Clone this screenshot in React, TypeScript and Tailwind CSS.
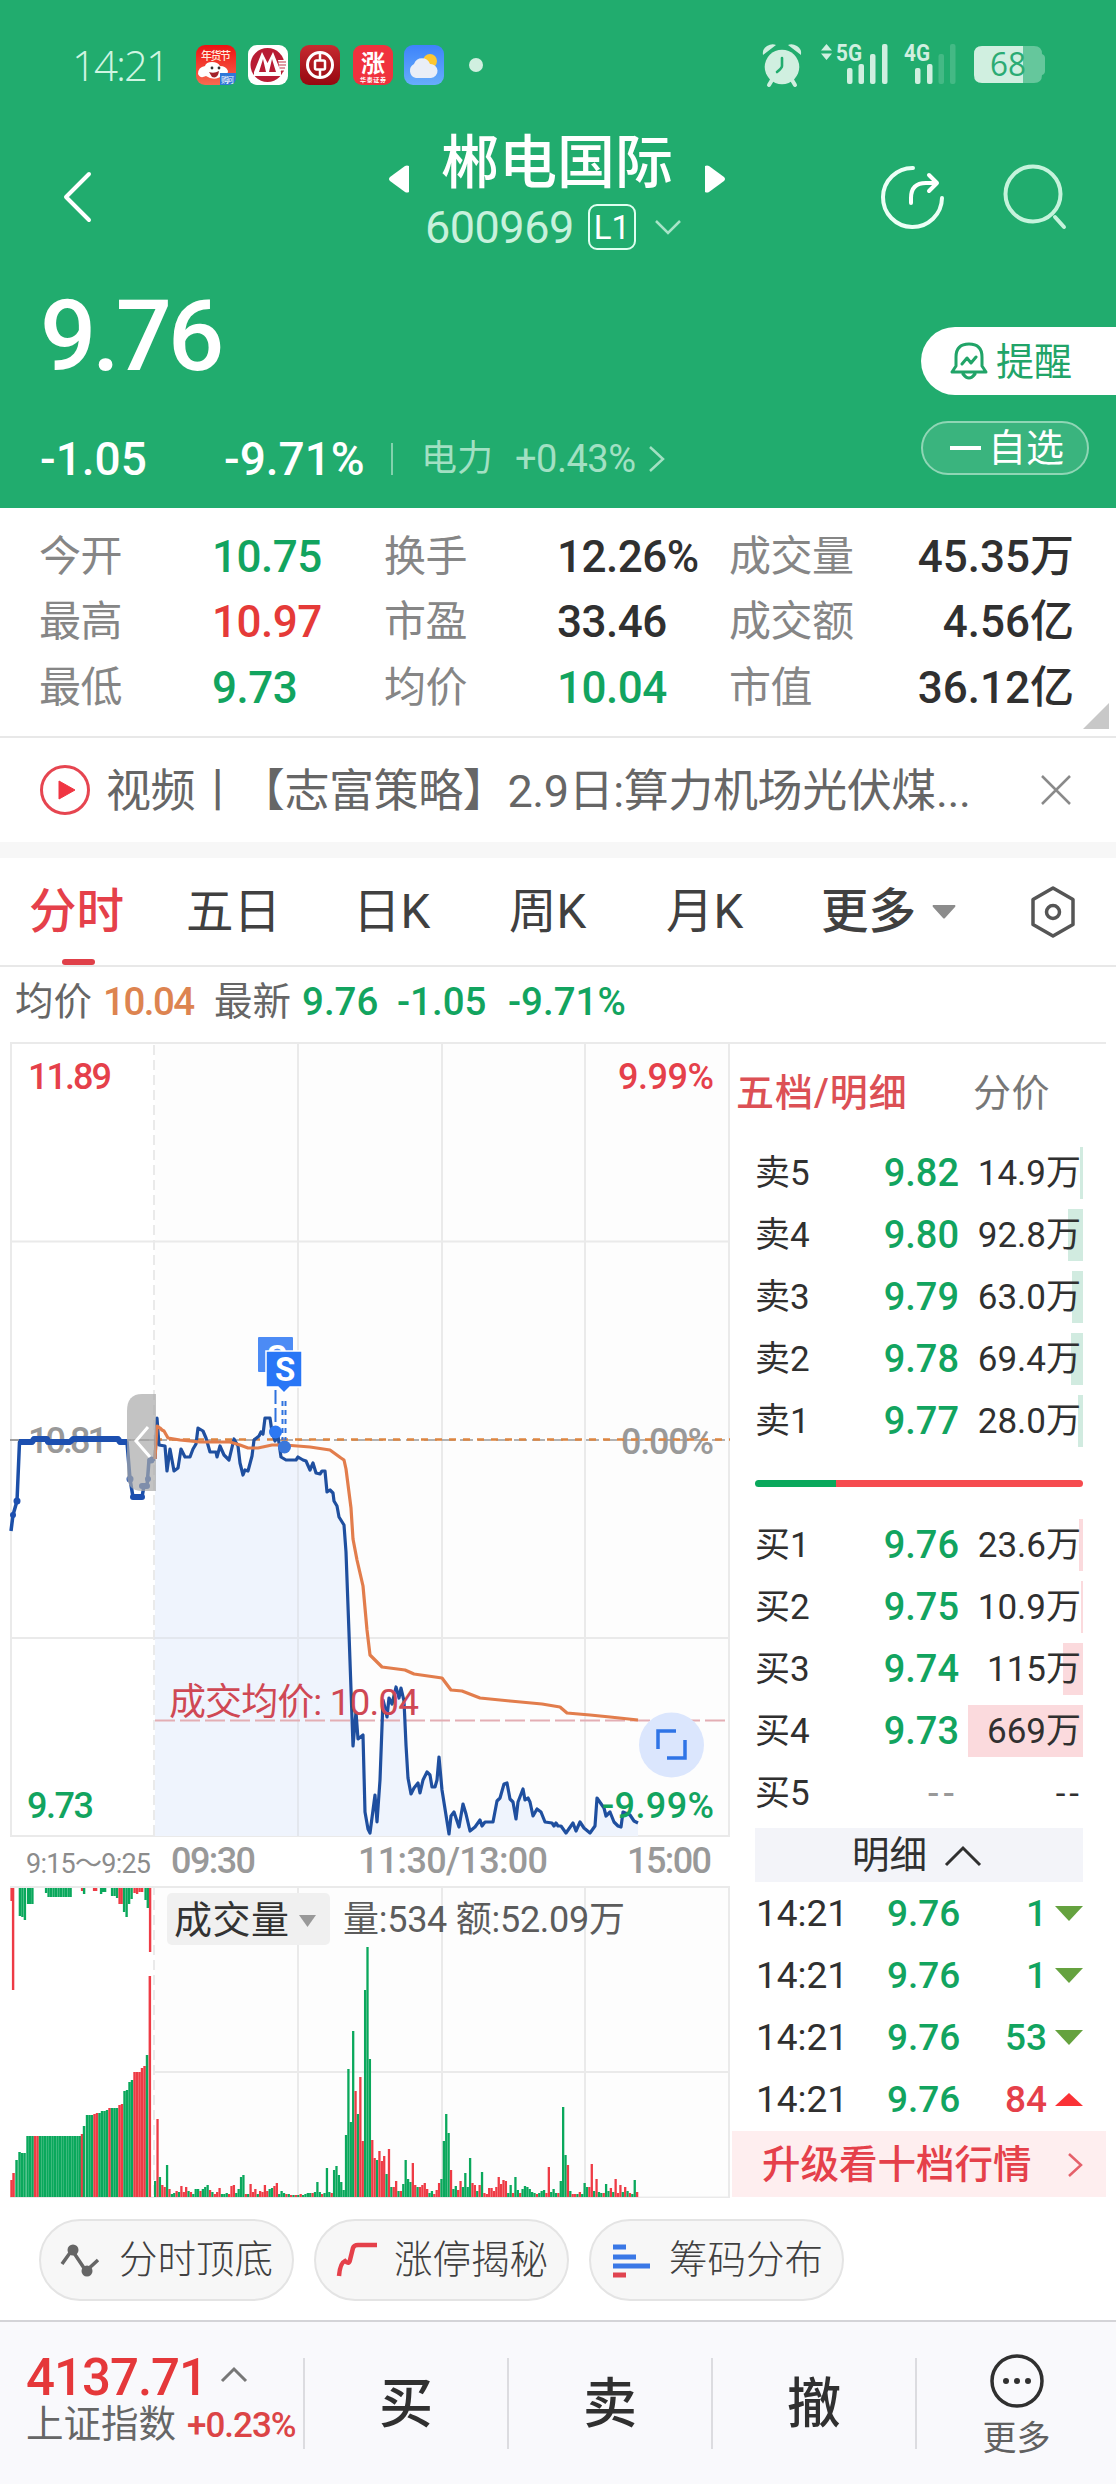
import React from 'react';

const GREEN = '#12a45f';
const RED = '#e5404a';
const BAR_GREEN = '#0aa85c';
const BAR_RED = '#ee3b45';

const stats = [
    ['今开', '10.75', 'text-[#12a45f]', '换手', '12.26%', 'text-[#303030]', '成交量', '45.35万'],
    ['最高', '10.97', 'text-[#e53a38]', '市盈', '33.46', 'text-[#303030]', '成交额', '4.56亿'],
    ['最低', '9.73', 'text-[#12a45f]', '均价', '10.04', 'text-[#12a45f]', '市值', '36.12亿'],
];

const sells = [
    { label: '卖5', price: '9.82', qty: '14.9万', bar: 3 },
    { label: '卖4', price: '9.80', qty: '92.8万', bar: 15 },
    { label: '卖3', price: '9.79', qty: '63.0万', bar: 11 },
    { label: '卖2', price: '9.78', qty: '69.4万', bar: 12 },
    { label: '卖1', price: '9.77', qty: '28.0万', bar: 5 },
];

const buys = [
    { label: '买1', price: '9.76', qty: '23.6万', bar: 4 },
    { label: '买2', price: '9.75', qty: '10.9万', bar: 2 },
    { label: '买3', price: '9.74', qty: '115万', bar: 20 },
    { label: '买4', price: '9.73', qty: '669万', bar: 115 },
    { label: '买5', price: '--', qty: '--', bar: 0 },
];

const ticks = [
    { qty: '1', up: false },
    { qty: '1', up: false },
    { qty: '53', up: false },
    { qty: '84', up: true },
];

const preLine = '11,1531 13,1515 17,1501 19.5,1442 32,1442 34,1439 47,1439 48,1442 70,1442 73,1439 118,1439 120,1442 127,1442 130,1479 133,1497 142,1497 144,1486 147,1486 149,1460 155,1459';

const priceLine = '155,1459 157,1418 159,1445 165,1446 167,1471 170,1449 174,1471 178,1468 181,1449 185,1457 190,1457 193,1449 196,1444 198,1428 203,1431 206,1438 210,1452 216,1452 217,1457 220,1446 224,1455 229,1460 234,1439 238,1446 240,1463 243,1475 245,1470 248,1471 252,1456 254,1440 259,1436 261,1432 263,1434 265,1418 270,1418 272,1432 275,1441 278,1436 281,1457 286,1460 296,1460 298,1457 303,1460 306,1461 310,1470 313,1463 316,1473 320,1474 322,1471 325,1471 327,1492 330,1490 333,1493 334,1501 337,1506 339,1517 344,1525 346,1552 349,1633 353,1746 356,1712 358,1739 363,1735 365,1812 368,1829 370,1833 375,1795 377,1822 380,1780 383,1700 385,1708 387,1717 389,1698 392,1704 396,1687 399,1698 401,1688 404,1701 406,1745 408,1778 411,1794 414,1788 418,1783 420,1793 423,1780 427,1772 430,1775 432,1787 435,1787 437,1780 439,1757 442,1790 449,1834 451,1816 454,1812 459,1827 463,1804 466,1814 470,1831 475,1827 480,1820 482,1826 485,1822 493,1822 497,1801 500,1798 504,1784 507,1783 510,1799 513,1802 516,1819 518,1802 523,1789 525,1800 528,1798 530,1802 533,1816 537,1809 541,1812 545,1822 552,1823 554,1826 556,1823 558,1826 561,1826 566,1833 573,1823 576,1831 580,1822 584,1828 590,1833 595,1826 597,1798 604,1808 606,1816 610,1812 614,1822 618,1826 621,1827 623,1812 630,1815 634,1821 638,1823';

const avgLine = '155,1459 157,1426 160,1428 162,1430 164,1431 168,1438 180,1440 200,1442 230,1442 240,1445 248,1448 258,1448 272,1445 285,1445 310,1447 330,1450 341,1458 344,1460 346,1469 351,1508 353,1539 357,1560 363,1586 367,1630 370,1655 375,1660 382,1667 405,1670 414,1674 442,1678 451,1690 462,1691 480,1698 510,1701 542,1704 560,1707 567,1713 590,1715 610,1717 638,1720';

// positive = red, negative = green, one value per minute
const volumes = [
    -16, 78, -20, 12, 10, -32, 8, -3, -4, 6, -5, 11, 5, 10, -6, 5, -3, -8, -8, 6, -8, -10, -12, 7, -5, 3, 5, 9, -3, -3, -4, 3, 11, 12, -4,
    -8, -20, -22, 3, -3, 13, 5, 8, -3, 6, 5, 12, 6, -8, -9, 11, 14, -3, -6, -4, 3, -3, 2, -2, 2, -2, 3, -2, -3, -4, -4, 4, -5, -15, -5, 3,
    -4, -29, -5, 4, -27, -31, -22, -15, -7, -62, -128, -75, -166, 106, -83, 120, 56, -207, -250, -138, 57, 39, -37, 46, 36, 41, -23, 48,
    -10, 10, 16, -6, 6, -13, -37, -18, -15, 34, 12, -10, 10, 12, 14, 8, -4, -6, 3, 7, 14, -18, -56, -83, -64, 27, -8, -11, 7, 16, -10, -24,
    -10, -39, 14, 12, -6, 12, -25, 4, 3, 9, 9, 6, 10, 20, 13, 17, 16, -4, -12, 4, -20, -7, 4, -8, -11, -10, -8, -5, -4, 3, -4, -6, -7, 4, 30,
    -5, -8, -4, 4, -16, -90, -42, 32, -6, 3, 3, -3, 5, -3, -14, -10, 10, 33, -6, 18, -5, -4, 4, -13, -6, 9, -5, 18, 4, 12, -5, 10, -6, 4, -3, -17, 5,
];

// call auction section: [x, height]
const preVolumes: number[][] = [
    [11.5, 17], [13.5, 24], [16.5, -37], [19.5, -45], [22, -44], [24.5, -44], [27.5, -61], [30, -61], [32.5, -61], [35, 61], [37.5, 61],
    [40, -61], [42.5, -61], [45, -61], [47.5, -61], [50, -61], [52.5, -61], [55, -61], [57.5, -61], [60, -61], [62.5, -61], [65, -61],
    [67.5, -61], [70, -61], [72.5, -61], [75, -61], [77.5, -61], [80, -61], [82, 63], [84, -71], [87, -82], [89.5, -82], [92, -82],
    [94.5, 83], [97, 84], [99.5, -84], [102, -86], [104.5, -86], [107, -87], [109.5, 89], [112, -89], [114.5, -89], [117, -89],
    [119.5, 92], [122, 93], [124.5, -106], [127, -107], [129.5, -115], [132, -117], [134.5, 125], [137, 125], [139.5, 125],
    [142, 129], [144.5, 131], [147, -142], [149.8, 221],
];

const preTop: number[][] = [
    [11.5, 13], [13, 102], [19.8, -28], [22.3, -29], [24.8, -32], [28, -16], [30, -16], [32.3, -16], [46, -5], [48.5, -9], [51, -9], [53.5, -9],
    [56, -9], [58.5, -9], [61, -9], [63.5, -9], [66, -9], [68.5, -9], [70.5, -9], [82, 3], [84, -6], [94, 3], [96, 3], [101, -6], [103, -4], [105, -4],
    [112, -8], [114.5, -8], [117, -10], [119.5, 16], [121.5, 16], [124, -24], [126.5, -29], [129, -16], [131.5, -11], [134.5, 5], [137, 6],
    [139.5, 4], [142, 4], [145.5, -12], [147.7, -20], [150, 64],
];

const AppIcons = () => (
    <svg className="ml-[30px]" width="250" height="40" viewBox="0 0 250 40">
        <defs>
            <linearGradient id="boc" x1="0" y1="0" x2="0" y2="1">
                <stop offset="0" stopColor="#c62a30" />
                <stop offset="1" stopColor="#960810" />
            </linearGradient>
            <linearGradient id="sky" x1="0" y1="0" x2="0" y2="1">
                <stop offset="0" stopColor="#3e83fb" />
                <stop offset="1" stopColor="#67adfb" />
            </linearGradient>
            <linearGradient id="fest" x1="0" y1="0" x2="0" y2="1">
                <stop offset="0" stopColor="#ee1112" />
                <stop offset="1" stopColor="#f76a50" />
            </linearGradient>
        </defs>
        <rect x="0" y="0" width="40" height="40" rx="9" fill="url(#fest)" />
        <text x="5" y="15" fontSize="11" fontWeight="500" fill="#ffe9dc" textLength="30">年货节</text>
        <path d="M2 29q0-7 7-8q1-4 7-4t8 4q6 0 8 5q0 4-5 4q-8 7-17 1q-6 3-8-2z" fill="#fff" />
        <circle cx="16" cy="23" r="1.4" fill="#333" />
        <circle cx="23" cy="23" r="1.4" fill="#333" />
        <path d="M13 27q5 2 10-1q-1 8-7 6z" fill="#a3222a" />
        <path d="M24 28h16v4q0 8-8 8h-8z" fill="#2f77d8" />
        <text x="25" y="37.500" fontSize="8" fill="#fff" textLength="13">购河</text>

        <rect x="52" y="0" width="40" height="40" rx="9" fill="#fff" />
        <circle cx="71.500" cy="20" r="17" fill="#b81c34" />
        <path d="M82 15h9v11h-7z" fill="#fff" />
        <path d="M82 17h8M83 20h7M84 23h5M85 26h3" stroke="#c23a4c" strokeWidth="1.200" />
        <path d="M58 27L66 7L71.500 18L77 7L85 27V31H58z" fill="#fff" />
        <path d="M63 27L67 14L70 27zM73 27L76 14L80 27z" fill="#b81c34" />

        <rect x="104" y="0" width="40" height="40" rx="9" fill="url(#boc)" />
        <circle cx="124" cy="20" r="12.500" fill="none" stroke="#fff" strokeWidth="3" />
        <rect x="119" y="15.500" width="10" height="9" rx="1.500" fill="none" stroke="#fff" strokeWidth="2.500" />
        <path d="M124 8v7M124 25v7" stroke="#fff" strokeWidth="2.500" />

        <rect x="157" y="0" width="40" height="40" rx="9" fill="#f0323e" />
        <text x="165" y="27" fontSize="24" fontWeight="700" fill="#fff">涨</text>
        <text x="164" y="37" fontSize="6" fontWeight="700" fill="#fff" textLength="26">华泰证券</text>

        <rect x="208" y="0" width="40" height="40" rx="9" fill="url(#sky)" />
        <circle cx="234" cy="16" r="7" fill="#fdc731" />
        <path d="M220 33a7.500 7.500 0 0 1-2-14a8.500 8.500 0 0 1 16 0a7 7 0 0 1 1 14z" fill="#e9eef7" />
    </svg>
);

const SystemIcons = () => (
    <svg className="absolute right-[70px] top-[40px]" width="286" height="50" viewBox="760 40 286 50" fill="#d0efe0">
        <circle cx="782" cy="67" r="17.300" />
        <path d="M763 55q-1-6 4-9q5-3 9-1zM801 55q1-6-4-9q-5-3-9-1z" />
        <path d="M772 80l-3 5M792 80l3 5" stroke="#d0efe0" strokeWidth="4" strokeLinecap="round" />
        <path d="M782 58v8q0 2-5 6" fill="none" stroke="#21ac6e" strokeWidth="2.600" strokeLinecap="round" />
        <path d="M821 50.500l5.500-6.500l5.500 6.500zM821 53.500l5.500 6.500l5.500-6.500z" />
        <text x="836" y="61" fontSize="24" fontWeight="700" textLength="26" lengthAdjust="spacingAndGlyphs">5G</text>
        <rect x="847" y="68" width="5.500" height="16" rx="2" />
        <rect x="858.500" y="64" width="5.500" height="20" rx="2" />
        <rect x="870" y="54" width="5.500" height="30" rx="2" />
        <rect x="882" y="44" width="5.500" height="40" rx="2" />
        <text x="904" y="61" fontSize="24" fontWeight="700" textLength="26" lengthAdjust="spacingAndGlyphs">4G</text>
        <rect x="915" y="68" width="5.500" height="16" rx="2" />
        <rect x="927" y="64" width="5.500" height="20" rx="2" />
        <rect x="938.500" y="54" width="5.500" height="30" rx="2" opacity=".2" />
        <rect x="950" y="44" width="5.500" height="40" rx="2" opacity=".2" />
        <path d="M982 46h41v37h-41q-8 0-8-8v-21q0-8 8-8z" />
        <path d="M1023 46h11q8 0 8 8q3 1 3 4v13q0 3-3 4q0 8-8 8h-11z" fill="#65c79c" />
        <text x="990" y="76" fontSize="32" fill="#2bab74" textLength="36" lengthAdjust="spacingAndGlyphs" className="[font-family:'Open_Sans',sans-serif]">68</text>
    </svg>
);

const Header = () => (
    <header className="h-[508px] bg-[#21ac6e] text-white">
        <div className="relative flex h-[130px] items-center pl-[72px]">
            <span className="w-[94px] text-[42px] leading-none tracking-[-2px] whitespace-nowrap font-light text-[#d0f5e2] [font-family:'Open_Sans',sans-serif]">14:21</span>
            <AppIcons />
            <span className="ml-[23px] size-[14px] rounded-full bg-[#d0efe0]" />
            <SystemIcons />
        </div>

        <div className="flex h-[134px] pl-[62px]">
            <svg className="mt-[40px]" width="32" height="54" viewBox="0 0 32 54" fill="none" stroke="#fff" strokeWidth="4" strokeLinecap="round" strokeLinejoin="round">
                <path d="M27 4L4 27L27 50" />
            </svg>
            <div className="ml-[295px] flex w-[336px] flex-col">
                <div className="flex h-[64px] items-center justify-between text-[58px] leading-none font-medium">
                    <svg className="mt-[34px]" width="20" height="28" viewBox="0 0 20 28" fill="#fff"><path d="M20 1v26q-2 1-4 0L1 16q-2-2 0-4L16 1q2-1 4 0z" /></svg>
                    <span className="mt-[2px]">郴电国际</span>
                    <svg className="mt-[34px]" width="20" height="28" viewBox="0 0 20 28" fill="#fff"><path d="M0 1v26q2 1 4 0L19 16q2-2 0-4L4 1q-2-1-4 0z" /></svg>
                </div>
                <div className="mt-[9px] ml-[36px] flex h-[48px] items-center">
                    <span className="w-[163px] text-[45px] leading-none tracking-[-0.500px] text-[#c8f1dc]">600969</span>
                    <span className="flex h-[46px] w-[48px] items-center justify-center rounded-[9px] border-[2.500px] border-[#e0fff0] text-[33px] leading-none">L1</span>
                    <svg className="ml-[18px]" width="28" height="17" viewBox="0 0 28 17" fill="none" stroke="#a8e4c8" strokeWidth="2.500"><path d="M2 2l12 12L26 2" /></svg>
                </div>
            </div>
            <svg className="mt-[33px] ml-[153px]" width="68" height="68" viewBox="0 0 68 68" fill="none" stroke="#fff" strokeWidth="4" strokeLinecap="round" strokeLinejoin="round">
                <path d="M35 5A29.500 29.500 0 1 0 64 35" stroke="#ecfff6" />
                <path d="M33 40v-5q0-15 15-15h11M51 12l8 8l-8 8" />
            </svg>
            <svg className="mt-[33px] ml-[55px]" width="68" height="68" viewBox="0 0 68 68" fill="none" stroke="#c5f3dc" strokeWidth="4" strokeLinecap="round">
                <circle cx="32" cy="31" r="27.500" />
                <path d="M54 54l9 10" />
            </svg>
        </div>

        <div className="flex justify-between">
            <div className="pl-[40px]">
                <div className="mt-[22px] text-[99px] leading-[100px] font-medium tracking-[-4px]">9.76</div>
                <div className="mt-[48px] flex h-[50px] items-center text-[46px] leading-none">
                    <span className="w-[184px] font-medium">-1.05</span>
                    <span className="w-[167px] font-medium">-9.71%</span>
                    <span className="h-[32px] w-[2px] bg-[#82d2ad]" />
                    <span className="ml-[28px] w-[94px] text-[36px] text-[#a2e0c3]">电力</span>
                    <span className="w-[133px] text-[38px] tracking-[-0.500px] text-[#a2e0c3]">+0.43%</span>
                    <svg width="18" height="28" viewBox="0 0 18 28" fill="none" stroke="#a2e0c3" strokeWidth="2.500"><path d="M2 2l13 12L2 26" /></svg>
                </div>
            </div>
            <div className="flex flex-col items-end pt-[63px]">
                <div className="flex h-[68px] w-[195px] items-center rounded-l-full bg-white pl-[29px] text-[#21a468]">
                    <svg width="38" height="40" viewBox="0 0 38 40" fill="none" stroke="currentColor" strokeWidth="3" strokeLinejoin="round" strokeLinecap="round">
                        <path d="M2 31h34l-4-6v-9q0-13-13-13T6 16v9zM13 33q6 8 12 0M12 23l5-6l4 5l5-6" />
                    </svg>
                    <span className="mt-[2px] ml-[8px] text-[38px] leading-none">提醒</span>
                </div>
                <div className="mt-[26px] mr-[27px] flex h-[54px] w-[168px] items-center rounded-full border-2 border-[#8fd6b5] bg-[#3ab47e] pl-[27px]">
                    <span className="h-[4px] w-[31px] bg-white" />
                    <span className="ml-[7px] text-[38px] leading-none">自选</span>
                </div>
            </div>
        </div>
    </header>
);

const StatsGrid = () => (
    <div className="relative h-[230px] border-b-2 border-[#e8e8e8] pt-[16px] pl-[39px] text-[44px] leading-none">
        {stats.map((r) => (
            <div key={r[0]} className="grid h-[65.500px] grid-cols-[173px_172px_173px_172px_345px] items-center tracking-[-0.500px] text-[#303030]">
                <span className="text-[42px] text-[#868686]">{r[0]}</span>
                <span className={`font-medium ${r[2]}`}>{r[1]}</span>
                <span className="text-[42px] text-[#868686]">{r[3]}</span>
                <span className={`font-medium whitespace-nowrap ${r[5]}`}>{r[4]}</span>
                <span className="flex items-center justify-between">
                    <span className="text-[42px] text-[#868686]">{r[6]}</span>
                    <span className="font-medium tracking-normal">{r[7]}</span>
                </span>
            </div>
        ))}
        <svg className="absolute right-[7px] bottom-[7px]" width="26" height="26" viewBox="0 0 26 26" fill="#c8c8c8"><path d="M26 0v26H0z" /></svg>
    </div>
);

const NewsBar = () => (
    <div className="flex h-[104px] items-center pl-[38px] text-[45px] leading-none text-[#666]">
        <svg width="54" height="54" viewBox="0 0 54 54">
            <circle cx="27" cy="27" r="23.500" fill="none" stroke="#e64550" strokeWidth="3" />
            <path d="M21 18l16 9l-16 9z" fill="#f03542" stroke="#f03542" strokeWidth="1" />
        </svg>
        <span className="mt-[2px] ml-[14px] w-[934px] tracking-[-0.400px] whitespace-nowrap">视频丨【志富策略】2.9日:算力机场光伏煤...</span>
        <svg width="32" height="32" viewBox="0 0 32 32" stroke="#8a8a8a" strokeWidth="2.500"><path d="M2 2l28 28M30 2L2 30" /></svg>
    </div>
);

const Tabs = () => (
    <div className="flex h-[109px] items-center border-b-2 border-[#e8e8e8] pl-[29px] text-[47.500px] leading-none text-[#404040]">
        <div className="relative w-[157px] pt-[2px] font-medium text-[#e5404a]">
            分时
            <span className="absolute -bottom-[29px] left-[33px] h-[6px] w-[33px] rounded-[3px] bg-[#e04049]" />
        </div>
        <span className="mt-[2px] w-[167px]">五日</span>
        <span className="mt-[2px] w-[156px]">日K</span>
        <span className="mt-[2px] w-[157px]">周K</span>
        <span className="mt-[2px] w-[155px]">月K</span>
        <span className="mt-[2px] w-[111px] font-medium">更多</span>
        <svg width="24" height="14" viewBox="0 0 24 14" fill="#8c8c8c"><path d="M1 0h22q1 1 0 2L13 13q-1 1-2 0L1 2q-1-1 0-2z" /></svg>
        <svg className="ml-[71px]" width="52" height="54" viewBox="0 0 52 54" fill="none" stroke="#555" strokeWidth="3.500" strokeLinejoin="round">
            <path d="M26 3L46 14.500V39.500L26 51L6 39.500V14.500z" />
            <circle cx="26" cy="27" r="6.500" />
        </svg>
    </div>
);

const InfoLine = () => (
    <div className="flex h-[75px] items-center pt-[4px] pl-[15px] pb-[8px] text-[38.500px] leading-none text-[#666]">
        <span className="w-[88px]">均价</span>
        <span className="w-[111px] font-medium tracking-[-1.500px] text-[#dd8450]">10.04</span>
        <span className="w-[88px]">最新</span>
        <span className="w-[95px] font-medium text-[#12a45f]">9.76</span>
        <span className="w-[111px] font-medium text-[#12a45f]">-1.05</span>
        <span className="font-medium text-[#12a45f]">-9.71%</span>
    </div>
);

interface LabelProps {
    x: number;
    y: number;
    w: number;
    size?: number;
    weight?: number;
    fill: string;
    children: string;
}

const Label = ({ x, y, w, size = 36, weight = 500, fill, children }: LabelProps) => (
    <text x={x} y={y} fontSize={size} fontWeight={weight} fill={fill} textLength={w}>{children}</text>
);

const Chart = () => (
    <svg width="730" height="1156" viewBox="0 1042 730 1156" className="shrink-0">
        <rect x="155" y="1044" width="574" height="1152" fill="#fdfdfd" />
        <g stroke="#eaeaea" strokeWidth="2" fill="none">
            <path d="M10 1043H730M11 1042V1836M10 1241.500H730M10 1638H730M10 1836H730M298 1043V1836M442 1043V1836M585 1043V1836M729 1043V2198" />
            <path d="M10 1887H730M154 2072H730M298 1887V2197M442 1887V2197M585 1887V2197M10 2197.500H730" />
            <path d="M154 1045V2197" strokeDasharray="10 5" />
        </g>
        <rect x="0" y="1837" width="730" height="49" fill="#fff" />
        <path d="M10 1440H730" stroke="#999" strokeWidth="1.500" strokeDasharray="13 5" />
        <path d="M10 1440H155" stroke="#999" strokeWidth="1.500" />
        <polygon points={`155,1836 ${priceLine} 638,1836`} fill="#eff4fd" />
        <path d="M298 1460V1836M154 1638H350" stroke="#e3e7ee" strokeWidth="2" />
        <path d="M155 1720.500H730" stroke="#e3aeb4" strokeWidth="2" strokeDasharray="20 5" />

        <Label x={28} y={1453} w={80} fill="#999">10.81</Label>
        <Label x={621} y={1454} w={93} fill="#999">0.00%</Label>
        <path d="M155 1439.500H730" stroke="#dd8540" strokeWidth="2.500" strokeDasharray="7 7" />
        <polyline points={preLine} fill="none" stroke="#1c4fa8" strokeWidth="3.500" strokeLinejoin="round" />
        <polyline points="19,1442 32,1442 34,1439 47,1439 48,1442 70,1442 73,1439 118,1439 120,1442 127,1442" fill="none" stroke="#1c4fb0" strokeWidth="6" strokeLinejoin="round" />
        <path d="M133 1497h9M142 1486h5" stroke="#1c4fb0" strokeWidth="6" strokeLinecap="round" />
        <g fill="#1c4fb0">
            <circle cx="13" cy="1515" r="3" />
            <circle cx="17" cy="1501" r="3.500" />
            <circle cx="130" cy="1479" r="3.500" />
            <circle cx="148" cy="1479" r="3" />
            <circle cx="151" cy="1460" r="3.500" />
        </g>
        <polyline points={priceLine} fill="none" stroke="#1f4f9f" strokeWidth="3.200" strokeLinejoin="round" />
        <polyline points={avgLine} fill="none" stroke="#e27d4c" strokeWidth="3.200" strokeLinejoin="round" />

        <path d="M156 1394h-14q-15 0-15 17v64q0 16 15 16h14z" fill="#aaa" opacity=".7" />
        <path d="M148 1427L136 1441L150 1457" fill="none" stroke="#fff" strokeWidth="3" />

        <g stroke="#2f72de" strokeWidth="2">
            <path d="M275.500 1390V1428" strokeDasharray="14 4" />
            <path d="M282.500 1401V1440M285.500 1401V1440" strokeDasharray="5 4" />
        </g>
        <circle cx="275.500" cy="1432" r="6.500" fill="#2c78f3" />
        <circle cx="284.500" cy="1447" r="6.500" fill="#3a78dc" />
        <rect x="258" y="1337" width="35" height="35" rx="1" fill="#4c8bf5" />
        <text x="267" y="1367" fontSize="32" fontWeight="700" fill="#fff">S</text>
        <path d="M266 1351h36v36h-12l-6 6l-6-6h-12z" fill="#2876f6" stroke="#fff" strokeWidth="1.500" />
        <text x="275" y="1381" fontSize="33" fontWeight="700" fill="#fff" textLength="19">S</text>

        <Label x={28} y={1089} w={84} fill={RED}>11.89</Label>
        <Label x={618} y={1089} w={96} fill={RED}>9.99%</Label>
        <Label x={27} y={1818} w={67} fill={GREEN}>9.73</Label>
        <Label x={602} y={1818} w={112} fill={GREEN}>-9.99%</Label>
        <Label x={169} y={1715} w={250} size={37} weight={400} fill="#cf4854">成交均价: 10.04</Label>

        <circle cx="671.500" cy="1745" r="32.500" fill="#dbe6fd" />
        <path d="M676 1731h-18v18M667 1758h18v-18" fill="none" stroke="#2f74e6" strokeWidth="3.500" />

        <Label x={26} y={1873} w={125} size={27} weight={400} fill="#8c8c8c">9:15～9:25</Label>
        <Label x={171} y={1873} w={85} fill="#999">09:30</Label>
        <Label x={358} y={1873} w={190} fill="#999">11:30/13:00</Label>
        <Label x={627} y={1873} w={85} fill="#999">15:00</Label>

        {preTop.map(([x, h]) => (
            <rect key={x} x={x - 1.1} y="1888" width="2.400" height={Math.abs(h)} fill={h > 0 ? BAR_RED : BAR_GREEN} />
        ))}
        {preVolumes.map(([x, h]) => (
            <rect key={x} x={x - 1.2} y={2197 - Math.abs(h)} width="2.500" height={Math.abs(h)} fill={h > 0 ? BAR_RED : BAR_GREEN} />
        ))}
        {volumes.map((h, i) => (
            <rect key={i} x={154 + i * 2.386} y={2197 - Math.abs(h)} width="2.300" height={Math.abs(h)} fill={h > 0 ? BAR_RED : BAR_GREEN} />
        ))}

        <rect x="167" y="1893" width="163" height="52" rx="5" fill="#f0f0f0" />
        <Label x={174} y={1933} w={115} size={38} weight={400} fill="#333">成交量</Label>
        <path d="M299 1915h17l-8.500 12z" fill="#999" />
        <Label x={343} y={1932} w={282} weight={400} fill="#5c5c5c">量:534 额:52.09万</Label>
    </svg>
);

const DepthRow = ({ row, barColor }: { row: typeof sells[number]; barColor: string }) => (
    <div className="relative flex h-[62px] items-center text-[35px] leading-none text-[#303030]">
        <div className={`absolute top-[5px] right-0 h-[52px] ${barColor}`} style={{ width: row.bar }} />
        <span className="relative w-[80px]">{row.label}</span>
        <span className={row.bar ? 'relative w-[124px] text-right text-[38px] font-medium text-[#12a45f]' : 'relative w-[124px] text-right text-[38px] tracking-[5px] text-[#999]'}>{row.price}</span>
        <span className={row.bar ? 'relative flex-1 pr-[2px] text-right' : 'relative flex-1 text-right tracking-[4px]'}>{row.qty}</span>
    </div>
);

const OrderBook = () => (
    <div className="w-[376px] border-t-2 border-[#eaeaea] leading-none">
        <div className="flex h-[98px] items-center pl-[6px] text-[38px]">
            <span className="w-[237px] font-medium tracking-[1px] text-[#dc5055]">五档/明细</span>
            <span className="tracking-[0.500px] text-[#777]">分价</span>
        </div>
        <div className="ml-[25px] w-[328px]">
            {sells.map((row) => <DepthRow key={row.label} row={row} barColor="bg-[#d1ebe0]" />)}
            <div className="flex h-[62px] items-center">
                <div className="h-[7px] w-[81px] rounded-l-full bg-[#0aa85c]" />
                <div className="h-[7px] flex-1 rounded-r-full bg-[#f64b4f]" />
            </div>
            {buys.map((row) => <DepthRow key={row.label} row={row} barColor="bg-[#fbdadd]" />)}
            <div className="mt-[4px] flex h-[54px] items-center bg-[#f3f4f9] pt-[1px] pl-[97px] text-[37.500px] text-[#303030]">
                明细
                <svg className="ml-[17px]" width="38" height="22" viewBox="0 0 38 22" fill="none" stroke="#303030" strokeWidth="3"><path d="M2 20L19 3L36 20" /></svg>
            </div>
            {ticks.map((t, i) => (
                <div key={i} className="flex h-[62px] items-center pt-[1px] text-[37px] text-[#303030]">
                    <span className="w-[132px] pl-[1px]">14:21</span>
                    <span className="font-medium text-[#12a45f]">9.76</span>
                    <span className={t.up ? 'flex-1 pr-[8px] text-right font-medium text-[#e5404a]' : 'flex-1 pr-[8px] text-right font-medium text-[#12a45f]'}>{t.qty}</span>
                    <svg width="28" height="15" viewBox="0 0 28 15">
                        {t.up ? <path d="M0 14L14 1L28 14z" fill="#fa3236" /> : <path d="M0 0h28L14 15z" fill="#65a23f" />}
                    </svg>
                </div>
            ))}
        </div>
        <div className="mt-[1px] ml-[2px] flex h-[66px] items-center bg-[#feeeef] pt-[2px] pl-[30px] text-[38.500px] text-[#e5404a]">
            <span className="w-[305px] font-medium">升级看十档行情</span>
            <svg width="16" height="26" viewBox="0 0 16 26" fill="none" stroke="#e5606a" strokeWidth="2.500"><path d="M2 2l12 11L2 24" /></svg>
        </div>
    </div>
);

const Pill = ({ icon, text }: { icon: React.ReactNode; text: string }) => (
    <div className="flex h-[82px] w-[255px] items-center rounded-full border-2 border-[#e4e4e4] bg-[#f7f7f7] pl-[18px]">
        <svg width="46" height="44" viewBox="0 0 46 44" fill="none">{icon}</svg>
        <span className="ml-[14px] text-[38.500px] leading-none font-light text-[#404040]">{text}</span>
    </div>
);

const Pills = () => (
    <div className="flex h-[122px] gap-[20px] pt-[21px] pl-[39px]">
        <Pill
            text="分时顶底"
            icon={
                <>
                    <path d="M3 26L13 12L27 33L39 22" stroke="#666" strokeWidth="3.500" />
                    <circle cx="14" cy="12" r="5.500" fill="#666" />
                    <circle cx="28" cy="33" r="5.500" fill="#666" />
                </>
            }
        />
        <Pill
            text="涨停揭秘"
            icon={<path d="M5 38Q6 25 11 23Q15 27 16 22L19 10Q20 7 24 7H43" stroke="#e5404a" strokeWidth="4.500" />}
        />
        <Pill
            text="筹码分布"
            icon={
                <>
                    <path d="M4 9H17M4 19H27M4 28H41" stroke="#3a78e6" strokeWidth="5" />
                    <path d="M4 37H17" stroke="#e04450" strokeWidth="5" />
                </>
            }
        />
    </div>
);

const BottomBar = () => (
    <footer className="flex h-[164px] border-t-2 border-[#d4d4d8] bg-[#f9f9fc] leading-none">
        <div className="w-[303px] pt-[30px] pl-[26px]">
            <div className="flex h-[50px] items-center text-[51px] tracking-[-1px] text-[#e5383a]">
                <span className="w-[194px] font-medium">4137.71</span>
                <svg className="-mt-[6px]" width="28" height="17" viewBox="0 0 28 17" fill="none" stroke="#777" strokeWidth="3"><path d="M2 15L14 3L26 15" /></svg>
            </div>
            <div className="mt-[3px] flex h-[40px] items-center text-[37.500px] whitespace-nowrap text-[#666]">
                <span className="w-[161px]">上证指数</span>
                <span className="text-[35px] font-medium tracking-[-1px] text-[#dc4446]">+0.23%</span>
            </div>
        </div>
        {['买', '卖', '撤'].map((t) => (
            <div key={t} className="mt-[36px] flex h-[91px] w-[204px] items-center justify-center border-l-2 border-[#dcdce0] pt-[3px] text-[54px] font-medium text-[#303030]">{t}</div>
        ))}
        <div className="mt-[36px] flex h-[91px] flex-1 flex-col items-center border-l-2 border-[#dcdce0] text-[34px] text-[#606060]">
            <svg className="-mt-[5px] shrink-0" width="56" height="56" viewBox="0 0 56 56" fill="#303030">
                <circle cx="28" cy="28" r="25" fill="none" stroke="#303030" strokeWidth="3.500" />
                <circle cx="17" cy="28" r="3" />
                <circle cx="28" cy="28" r="3" />
                <circle cx="39" cy="28" r="3" />
            </svg>
            <span className="mt-[12px]">更多</span>
        </div>
    </footer>
);

export default function App() {
    return (
        <div className="h-[2484px] w-[1116px] overflow-hidden bg-white [font-family:Roboto,'Noto_Sans_CJK_SC',sans-serif]">
            <Header />
            <StatsGrid />
            <NewsBar />
            <div className="h-[16px] bg-[#f7f7f7]" />
            <Tabs />
            <InfoLine />
            <div className="flex h-[1156px]">
                <Chart />
                <OrderBook />
            </div>
            <Pills />
            <BottomBar />
        </div>
    );
}
